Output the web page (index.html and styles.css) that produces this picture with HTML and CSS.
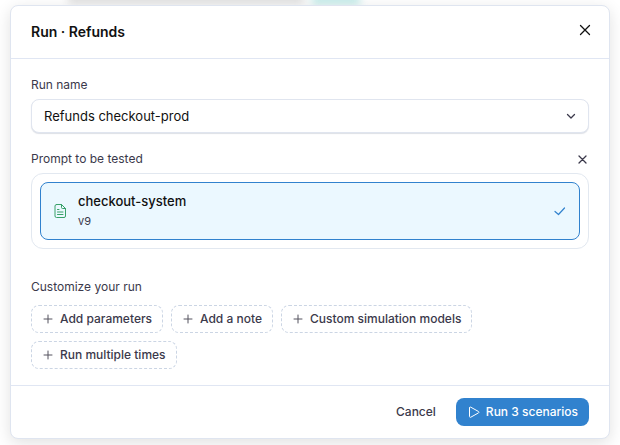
FILE: index.html
```html
<!DOCTYPE html>
<html lang="en">
<head>
<meta charset="utf-8">
<meta name="viewport" content="width=device-width, initial-scale=1">
<title>Run · Refunds</title>
<link rel="stylesheet" href="styles.css">
</head>
<body>
<div class="backdrop" aria-hidden="true"><span class="backdrop-line"></span><span class="backdrop-tag"></span></div>
<main class="dialog" role="dialog" aria-labelledby="dialog-title">
  <header class="dialog-header">
    <h1 class="dialog-title" id="dialog-title">Run · Refunds</h1>
    <button class="icon-button" type="button" aria-label="Close">
      <svg width="16" height="16" viewBox="0 0 16 16"><path d="M3.500 3.500l9 9M12.500 3.500l-9 9"/></svg>
    </button>
  </header>
  <div class="dialog-body">
    <label class="label" for="run-name">Run name</label>
    <div class="select-wrap">
      <select class="select" id="run-name"><option>Refunds checkout-prod</option></select>
      <svg class="select-arrow" width="16" height="16" viewBox="0 0 16 16"><path d="M4.500 6.500l3.500 3.500 3.500-3.500"/></svg>
    </div>
    <div class="label-row">
      <span class="label">Prompt to be tested</span>
      <button class="icon-button muted" type="button" aria-label="Remove prompt">
        <svg width="14" height="14" viewBox="0 0 14 14"><path d="M4 4l7 7M11 4l-7 7"/></svg>
      </button>
    </div>
    <div class="prompt-list">
      <button class="prompt" type="button" aria-pressed="true">
        <svg class="prompt-file" width="14" height="16" viewBox="0 0 14 16"><path d="M3.500 1.500h5l4 4v7.500a1.500 1.500 0 0 1-1.500 1.500h-7.500a1.500 1.500 0 0 1-1.500-1.500v-10a1.500 1.500 0 0 1 1.500-1.500z"/><path d="M8.500 1.500v3a1 1 0 0 0 1 1h3M4.500 6.500h1.500M4.500 9h5.500M4.500 11.500h5.500"/></svg>
        <span class="prompt-text">
          <span class="prompt-name">checkout-system</span>
          <span class="prompt-version">v9</span>
        </span>
        <svg class="prompt-check" width="16" height="16" viewBox="0 0 16 16"><path d="M3 8.500l3.500 3 6-6.500"/></svg>
      </button>
    </div>
    <h2 class="label">Customize your run</h2>
    <div class="chips">
      <button class="chip" type="button"><svg width="10" height="10" viewBox="0 0 10 10"><path d="M5 1v8M1 5h8"/></svg>Add parameters</button>
      <button class="chip" type="button"><svg width="10" height="10" viewBox="0 0 10 10"><path d="M5 1v8M1 5h8"/></svg>Add a note</button>
      <button class="chip" type="button"><svg width="10" height="10" viewBox="0 0 10 10"><path d="M5 1v8M1 5h8"/></svg>Custom simulation models</button>
      <button class="chip" type="button"><svg width="10" height="10" viewBox="0 0 10 10"><path d="M5 1v8M1 5h8"/></svg>Run multiple times</button>
    </div>
  </div>
  <footer class="dialog-footer">
    <button class="button" type="button">Cancel</button>
    <button class="button primary" type="button"><svg width="12" height="12" viewBox="0 0 12 12"><path d="M1.500 2v8.400c0 .9.600 1.100 1.300.8l7.700-4.300c.6-.4.600-1 0-1.400l-7.700-4.300c-.7-.3-1.300-.1-1.300.8z"/></svg>Run 3 scenarios</button>
  </footer>
</main>
</body>
</html>
```
FILE: styles.css
```css
* {
  box-sizing: border-box;
}

body {
  margin: 0;
  padding: 5px 10px 6px;
  background: #fff;
  color: #3b394b;
  font: 500 12px/16px Inter, "Liberation Sans", sans-serif;
  overflow: hidden;
}

button,
select {
  margin: 0;
  font: inherit;
  color: inherit;
}

svg {
  flex: none;
  fill: none;
  stroke: currentColor;
  stroke-linecap: round;
  stroke-linejoin: round;
}

.backdrop {
  position: absolute;
  top: -7px;
  left: 68px;
  display: flex;
  gap: 8px;
  filter: blur(4px);
}

.backdrop-line {
  width: 236px;
  height: 10px;
  background: #dcdcdc;
}

.backdrop-tag {
  width: 48px;
  height: 12px;
  background: #c4ecea;
}

.dialog {
  position: relative;
  border: 1px solid #dfe5f0;
  border-radius: 8px;
  background: #fff;
  box-shadow: 0 4px 16px rgba(0, 0, 0, 0.12);
}

.dialog-header {
  display: flex;
  align-items: center;
  justify-content: space-between;
  height: 53px;
  padding: 0 16px 0 20px;
  border-bottom: 1px solid #e0e6f3;
}

.dialog-title {
  margin: 0;
  color: #111;
  font-size: 14px;
  font-weight: 600;
  line-height: 20px;
}

.icon-button {
  display: flex;
  padding: 0;
  border: 0;
  background: none;
  color: #111;
}

.dialog-header .icon-button {
  padding: 0 0 4px;
}

.icon-button svg {
  stroke-width: 1.3;
}

.icon-button.muted {
  color: #3b394b;
}

.dialog-body {
  padding: 18px 20px 16px;
}

.label {
  display: block;
  margin: 0;
  font-size: 12px;
  font-weight: 400;
  line-height: 16px;
}

.select-wrap {
  position: relative;
  margin: 6px 0 18px;
}

.select {
  display: block;
  width: 100%;
  height: 34px;
  padding: 0 32px 0 12px;
  border: 1px solid #e0e5ef;
  border-radius: 8px;
  background: #fff;
  box-shadow: 0 1px 1px rgba(30, 50, 90, 0.15);
  color: #111;
  font-size: 13px;
  font-weight: 400;
  appearance: none;
}

.select-arrow {
  position: absolute;
  top: 9px;
  right: 10px;
  stroke-width: 1.3;
  pointer-events: none;
}

.label-row {
  display: flex;
  align-items: center;
  justify-content: space-between;
  margin-bottom: 6px;
}

.prompt-list {
  margin-bottom: 30px;
  padding: 8px;
  border: 1px solid #e2e8f0;
  border-radius: 12px;
}

.prompt {
  display: flex;
  align-items: center;
  gap: 11px;
  width: 100%;
  padding: 8px 11px 8px 12px;
  border: 1px solid #3182ce;
  border-radius: 8px;
  background: #ebf8ff;
  text-align: left;
}

.prompt-file {
  color: #38a169;
}

.prompt-text {
  flex: 1;
}

.prompt-name,
.prompt-version {
  display: block;
}

.prompt-name {
  margin-bottom: 2px;
  color: #111;
  font-size: 13px;
  line-height: 20px;
}

.prompt-version {
  padding-bottom: 2px;
  font-size: 11px;
  font-weight: 400;
}

.prompt-check {
  color: #3182ce;
  stroke-width: 1.2;
}

.chips {
  display: flex;
  flex-wrap: wrap;
  gap: 8px;
  margin-top: 10px;
}

.chip,
.button {
  display: flex;
  align-items: center;
  height: 28px;
  border-radius: 8px;
  background: none;
}

.chip {
  gap: 7px;
  padding: 0 10px 0 11px;
  border: 1px dashed #cbd5e4;
}

.chip svg {
  color: #55535f;
}

.dialog-footer {
  display: flex;
  justify-content: flex-end;
  gap: 8px;
  padding: 12px 20px;
  border-top: 1px solid #e0e6f3;
}

.button {
  gap: 6px;
  padding: 0 12px;
  border: 0;
}

.primary {
  padding: 0 11px 0 12px;
  background: #3182ce;
  color: #fff;
}
```
